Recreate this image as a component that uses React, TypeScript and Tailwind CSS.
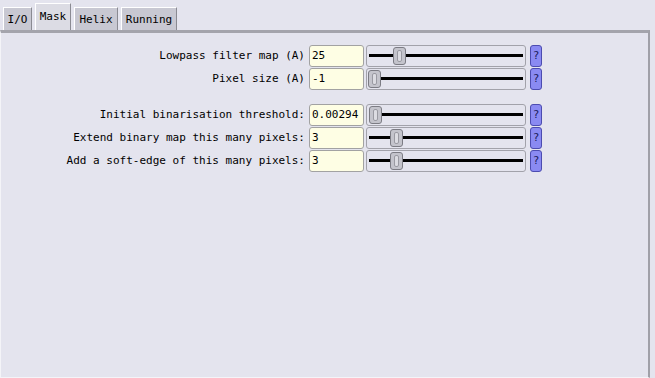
const mono = { fontFamily: '"DejaVu Sans Mono", "Liberation Mono", monospace' }

type Row = { label: string; value: string; thumb: number }

const topRows: Row[] = [
  { label: 'Lowpass filter map (A)', value: '25', thumb: 26 },
  { label: 'Pixel size (A)', value: '-1', thumb: 1 },
]

const bottomRows: Row[] = [
  { label: 'Initial binarisation threshold:', value: '0.00294', thumb: 2 },
  { label: 'Extend binary map this many pixels:', value: '3', thumb: 23 },
  { label: 'Add a soft-edge of this many pixels:', value: '3', thumb: 23 },
]

function Tab({ label, active, width }: { label: string; active?: boolean; width: string }) {
  return (
    <div
      className={`${width} flex items-center justify-center border-t border-l border-r border-t-white border-l-white border-r-[#8a8a92] ${
        active ? 'h-[27px] bg-[#dcdce4] pb-[2px]' : 'h-[23px] bg-[#c8c8d2]'
      }`}
    >
      <span className="text-[11px] leading-none text-black">{label}</span>
    </div>
  )
}

function Slider({ thumb }: { thumb: number }) {
  return (
    <div className="relative h-[22px] w-[160px] rounded-[3px] border border-[#a2a2aa] bg-[#e4e4ee]">
      <div className="absolute left-[2px] right-[2px] top-[8px] h-[3px] bg-black" />
      {/* thumb sits over the track */}
      <div
        className="absolute top-[1px] flex h-[18px] w-[13px] items-center justify-center rounded-[3px] border border-[#7c7c84] bg-[#c4c4cc]"
        style={{ left: thumb }}
      >
        <div className="h-[12px] w-[5px] rounded-[2px] border border-[#9a9aa2] bg-[#dcdce2]" />
      </div>
    </div>
  )
}

function FieldRow({ label, value, thumb }: Row) {
  return (
    <div className="flex h-[22px] items-center">
      <div className="w-[305px] pr-[1px] text-right text-[11px] text-black">{label}</div>
      <div className="ml-[3px] flex h-[22px] w-[55px] items-center rounded-[3px] border border-[#a2a2a2] bg-[#fefee4] pl-[2px] text-[11px] text-black">
        {value}
      </div>
      <div className="ml-[2px]">
        <Slider thumb={thumb} />
      </div>
      <div className="ml-[4px] flex h-[22px] w-[12px] items-center justify-center rounded-[3px] border border-[#4c4cb0] bg-[#8a8af2] text-[11px] text-[#1a1a5a]">
        ?
      </div>
    </div>
  )
}

export default function App() {
  return (
    <div className="flex h-[378px] w-[655px] flex-col bg-[#e4e4ee]" style={mono}>
      {/* Tabs */}
      <div className="flex h-[30px] items-end gap-[3px] pl-[3px]">
        <Tab label="I/O" width="w-[29px]" />
        <Tab label="Mask" width="w-[36px]" active />
        <Tab label="Helix" width="w-[44px]" />
        <Tab label="Running" width="w-[56px]" />
      </div>

      {/* Panel */}
      <div className="flex w-[650px] flex-1 flex-col gap-[1px] border-t-[3px] border-r-[2px] border-l border-b border-t-[#a4a4ac] border-r-[#a0a0a8] border-l-[#f4f4f8] border-b-[#f4f4f8] pt-[12px]">
        {topRows.map((r) => (
          <FieldRow key={r.label} {...r} />
        ))}
        <div className="h-[12px]" />
        {bottomRows.map((r) => (
          <FieldRow key={r.label} {...r} />
        ))}
      </div>
    </div>
  )
}
